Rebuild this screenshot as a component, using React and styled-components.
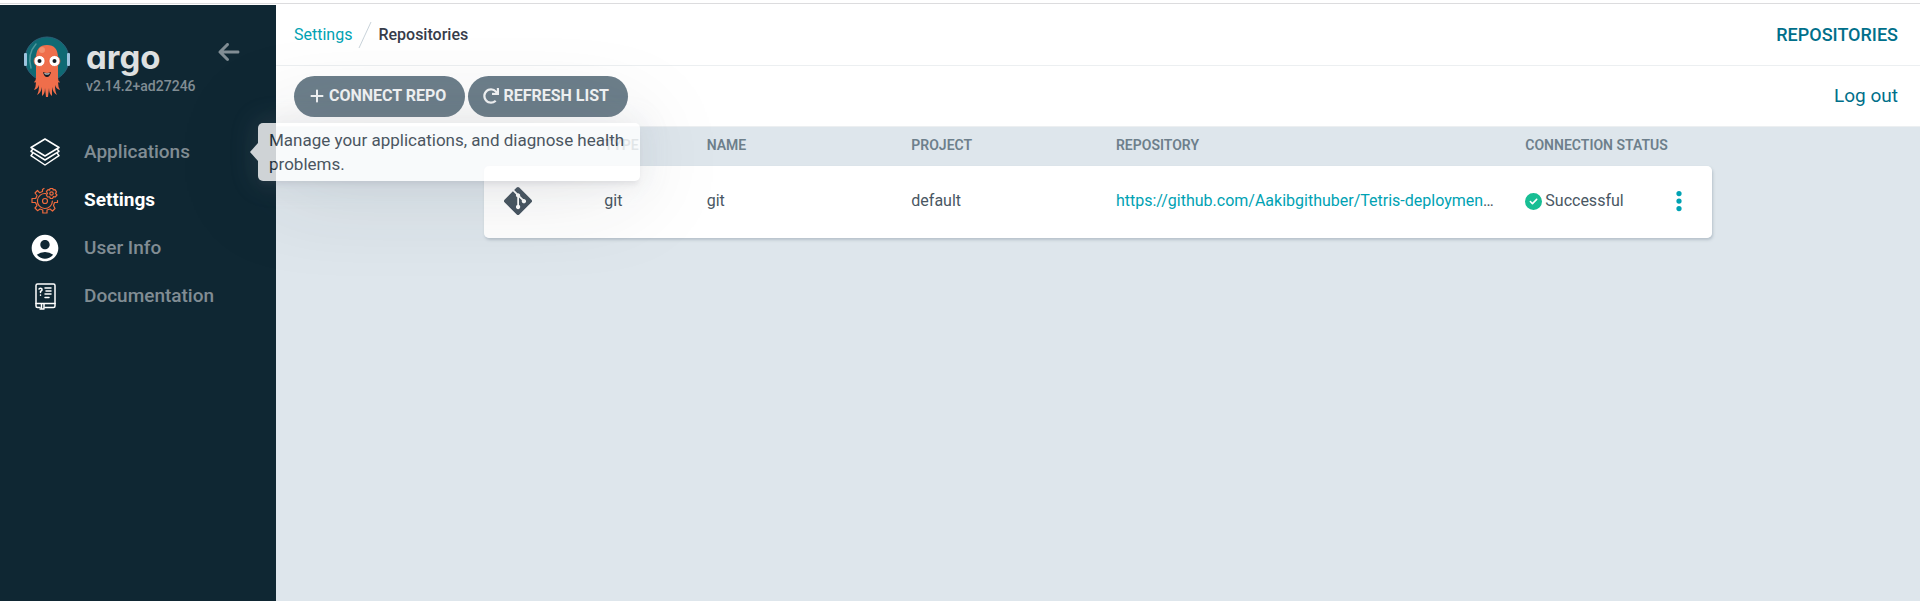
import React from 'react';
import styled, { createGlobalStyle, css } from 'styled-components';
import {
  FaArrowLeft,
  FaCircleCheck,
  FaEllipsisVertical,
  FaGitAlt,
  FaPlus,
} from 'react-icons/fa6';
import { FaRedo } from 'react-icons/fa';
import { MdAccountCircle } from 'react-icons/md';

const GlobalStyle = createGlobalStyle`
  *, *::before, *::after { box-sizing: border-box; }
  body {
    margin: 0;
    background: #dee6ec;
    color: #495763;
    font-family: Roboto, "Liberation Sans", sans-serif;
    font-size: 16px;
    line-height: 24px;
  }
  a { color: inherit; text-decoration: none; }
  button { font: inherit; border: 0; padding: 0; cursor: pointer; }
`;

const Page = styled.div`
  display: flex;
  flex-direction: column;
  min-height: 100vh;
`;

const TopEdge = styled.div`
  height: 5px;
  background: #fff;
  border-top: 3px solid #fff;
  box-shadow: inset 0 1px #dcdcde;
`;

const Shell = styled.div`
  display: flex;
  flex: 1;
`;

const Sidebar = styled.aside`
  flex: 0 0 276px;
  background: #0f2733;
  padding: 30px 22px;
`;

const Brand = styled.div`
  display: flex;
  align-items: flex-start;
`;

const BrandText = styled.div`
  flex: 1;
  margin-left: 14px;
  padding-top: 5px;
`;

const Wordmark = styled.div`
  color: #dee0e0;
  font-family: Inter, "Liberation Sans", sans-serif;
  font-feature-settings: "cv11";
  font-size: 33px;
  font-weight: 700;
  line-height: 34px;
`;

const Version = styled.div`
  color: #818d94;
  font-size: 14px;
  font-weight: 500;
  line-height: 24px;
`;

const CollapseButton = styled.button`
  display: flex;
  background: none;
  color: #818d94;
  font-size: 24px;
  margin: 5px 13px 0 0;
`;

const Nav = styled.nav`
  display: flex;
  flex-direction: column;
  margin-top: 29px;
`;

const NavLink = styled.a`
  display: flex;
  align-items: center;
  gap: 24px;
  height: 48px;
  padding-left: 8px;
  font-size: 19px;
  font-weight: 500;
  color: #818d94;
  ${(p) => p.$active && css`color: #fff; font-weight: 700;`}
`;

const NavIcon = styled.span`
  display: flex;
  flex: none;
  width: 30px;
  justify-content: center;
  svg { flex: none; }
`;

const Main = styled.main`
  flex: 1;
  min-width: 0;
`;

const Bar = styled.div`
  display: flex;
  align-items: center;
  justify-content: space-between;
  height: 61px;
  padding: 0 22px 0 18px;
  background: #fff;
  border-bottom: 1px solid #eceff1;
`;

const Breadcrumbs = styled.nav`
  display: flex;
  align-items: center;
  gap: 6px;
  font-weight: 500;
  color: #363c4a;
`;

const Crumb = styled.a`
  color: #00a2b3;
  font-weight: 400;
`;

const PageTitle = styled.h1`
  margin: 0;
  color: #006f8a;
  font-size: 18px;
  font-weight: 500;
`;

const Actions = styled.div`
  display: flex;
  gap: 3px;
`;

const ActionButton = styled.button`
  display: flex;
  align-items: center;
  gap: 4px;
  height: 41px;
  padding: 0 19px 0 15px;
  border-radius: 21px;
  background: #6d7f8b;
  color: #f3f5f6;
  font-size: 16px;
  font-weight: 700;
  text-transform: uppercase;
  svg { width: 16px; height: 16px; }
`;

const Logout = styled.a`
  color: #006f8a;
  font-size: 19px;
`;

const RepoTable = styled.table`
  width: 100%;
  max-width: 1228px;
  margin: 0 auto;
  table-layout: fixed;
  border-collapse: separate;
  border-spacing: 0;
  text-align: left;
`;

const Col = styled.col`
  width: ${(p) => (p.$span * 100) / 12}%;
`;

const Head = styled.th`
  height: 39px;
  padding: 0 18px 3px;
  color: #6d7f8b;
  font-size: 14px;
  font-weight: 600;
  line-height: 20px;
`;

const Row = styled.tr`
  border-radius: 5px;
  box-shadow: 1px 2px 3px rgba(109, 127, 139, 0.35);
`;

const Cell = styled.td`
  height: 72px;
  padding: 0 10px 2px 18px;
  overflow: hidden;
  background: #fff;
  white-space: nowrap;
  text-overflow: ellipsis;
  svg { display: block; }
  &:first-child { border-radius: 5px 0 0 5px; }
  &:last-child { border-radius: 0 5px 5px 0; }
`;

const RepoLink = styled.a`
  color: #00a2b3;
`;

const Status = styled.div`
  display: flex;
  align-items: center;
  gap: 3px;
  svg { color: #18be94; }
`;

const MenuButton = styled.button`
  background: none;
  color: #00a2b3;
  margin: 0 11px 0 auto;
  svg { color: inherit; }
`;

const NavItem = styled.div`
  position: relative;
`;

const Tooltip = styled.div`
  position: absolute;
  top: -5px;
  left: 236px;
  width: 382px;
  padding: 5px 11px;
  border-radius: 5px;
  background: #fff;
  color: #26323d;
  font-size: 17px;
  opacity: 0.8;
  z-index: 1;
  box-shadow:
    0 0 24px 5px rgba(154, 161, 177, 0.15),
    0 5px 96px -10px rgba(36, 40, 47, 0.25),
    0 5px 5px -2px rgba(91, 94, 105, 0.15);
  &::before {
    content: "";
    position: absolute;
    top: 20px;
    left: -8px;
    border: solid transparent;
    border-width: 9px 8px 9px 0;
    border-right-color: #fff;
  }
`;

const Mascot = () => (
  <svg width="50" height="64" viewBox="0 0 50 64" aria-hidden="true">
    <circle cx="25" cy="24" r="22" fill="#0f6a74" stroke="#2c5f78" />
    <rect x="2" y="18" width="3" height="13" rx="1" fill="#9dc3de" />
    <rect x="45" y="18" width="3" height="13" rx="1" fill="#9dc3de" />
    <path d="M14 9Q5 19 9 33" fill="none" stroke="#4e979c" strokeWidth="1.500" strokeLinecap="round" />
    <path d="M14 23Q14 10 25 10Q36 10 36 23V43Q36 46 38 47Q37 48 36 47Q36 52 38 55Q34 54 33 50Q33 57 35 60Q31 58 30 52Q30 59 30 61Q27 59 27 53L26 62H24L23 53Q23 59 20 61Q20 59 20 52Q19 58 15 60Q17 57 17 50Q16 54 12 55Q14 52 14 47Q13 48 12 47Q14 46 14 42Z" fill="#ef6e4b" />
    <circle cx="20" cy="15" r="3" fill="#f3906f" />
    <circle cx="17.500" cy="26" r="5.500" fill="#fff" stroke="#e9532b" strokeWidth=".7" />
    <circle cx="32.500" cy="26" r="5.500" fill="#fff" stroke="#e9532b" strokeWidth=".7" />
    <circle cx="17.500" cy="26" r="2" fill="#151a22" />
    <circle cx="32.500" cy="26" r="2" fill="#151a22" />
    <path d="M21 37Q25 39 29 37Q28 42 25 42Q22 42 21 37Z" fill="#151a22" />
    <path d="M22.500 38Q25 39 27.500 38V39Q25 40 22.500 39Z" fill="#fff" />
  </svg>
);

const LayersIcon = () => (
  <svg width="30" height="30" viewBox="0 0 30 30" fill="none" stroke="#fff" strokeWidth="1.500" strokeLinejoin="round" aria-hidden="true">
    <path d="M15 2L29 10.500L15 19L1 10.500Z" />
    <path d="M3 12L1 14.300L15 23L29 14.300L27 12" />
    <path d="M3 16L1 18.600L15 28L29 18.600L27 16" />
  </svg>
);

const GearsIcon = () => (
  <svg width="30" height="30" viewBox="0 0 30 30" fill="none" stroke="#ef6b3e" strokeWidth="1.200" strokeLinejoin="round" strokeLinecap="round" aria-hidden="true">
    <circle cx="15" cy="16" r="2.500" />
    <path d="M16 8.600A7.500 7.500 0 1 0 22.400 16" />
    <path d="M14 3.500L12.500 4.500V6.500L9.500 7.700L7.500 5.500L5 8L7 10.500L5.700 13.500H2V17.500H5.500L7 20.700L5 23L7.500 25.700L10 24L12.800 25V28H17V25L20 24L22.500 26L25 23.500L23.500 20.500L24.500 17.500H27.500V15.500" />
    <circle cx="21.500" cy="8.500" r="1.700" />
    <path d="M20 3.500H22.800L23.200 5L25 4.600L26.500 6.800L25.500 8.300L27 10L25.200 12L23.500 11.600L22.500 13.500H20.300L19.700 11.800L17.500 12L16.400 10L17.500 8.500L16.400 6.500L18 4.700L19.700 5.200Z" />
  </svg>
);

const BookIcon = () => (
  <svg width="30" height="30" viewBox="0 0 30 30" fill="none" stroke="#fff" strokeWidth="1.500" strokeLinecap="round" aria-hidden="true">
    <path d="M10 26.500H7.500Q6 26.500 6 25V4.500Q6 3 7.500 3H23.500Q25 3 25 4.500V25Q25 26.500 23.500 26.500H15" />
    <path d="M6 22.500H25M11.500 23V27.500M14 23V27.500M10 28H14" />
    <path d="M9 8Q10.500 6.500 12 8Q12.500 9.500 10.500 10.500V11.500M10.500 14V14.200M15 7H21M16 10H21M15 13H21M15 16.500H19" />
  </svg>
);

const Slash = () => (
  <svg width="14" height="28" viewBox="0 0 14 28" aria-hidden="true">
    <path d="M1 27L13 1" stroke="#c9d3da" />
  </svg>
);

const NAV_ITEMS = [
  { label: 'Applications', icon: <LayersIcon />, tip: 'Manage your applications, and diagnose health problems.' },
  { label: 'Settings', icon: <GearsIcon />, active: true },
  { label: 'User Info', icon: <MdAccountCircle size={32} color="#fff" /> },
  { label: 'Documentation', icon: <BookIcon /> },
];

const COLUMNS = [
  { label: '', span: 1 },
  { label: 'TYPE', span: 1 },
  { label: 'NAME', span: 2 },
  { label: 'PROJECT', span: 2 },
  { label: 'REPOSITORY', span: 4 },
  { label: 'CONNECTION STATUS', span: 2 },
];

const REPO_URL = 'https://github.com/Aakibgithuber/Tetris-deployment-file';

export default function App() {
  return (
    <Page>
      <GlobalStyle />
      <TopEdge />
      <Shell>
        <Sidebar>
          <Brand>
            <Mascot />
            <BrandText>
              <Wordmark>argo</Wordmark>
              <Version>v2.14.2+ad27246</Version>
            </BrandText>
            <CollapseButton type="button" aria-label="Collapse sidebar">
              <FaArrowLeft />
            </CollapseButton>
          </Brand>
          <Nav aria-label="Main">
            {NAV_ITEMS.map((item) => (
              <NavItem key={item.label}>
                <NavLink href="#" $active={item.active}>
                  <NavIcon>{item.icon}</NavIcon>
                  {item.label}
                </NavLink>
                {item.tip && <Tooltip role="tooltip">{item.tip}</Tooltip>}
              </NavItem>
            ))}
          </Nav>
        </Sidebar>
        <Main>
          <Bar>
            <Breadcrumbs aria-label="Breadcrumb">
              <Crumb href="#">Settings</Crumb>
              <Slash />
              <span>Repositories</span>
            </Breadcrumbs>
            <PageTitle>REPOSITORIES</PageTitle>
          </Bar>
          <Bar>
            <Actions>
              <ActionButton type="button"><FaPlus />Connect Repo</ActionButton>
              <ActionButton type="button"><FaRedo />Refresh List</ActionButton>
            </Actions>
            <Logout href="#">Log out</Logout>
          </Bar>
          <RepoTable>
            <colgroup>
              {COLUMNS.map((c, i) => <Col key={i} $span={c.span} />)}
            </colgroup>
            <thead>
              <tr>{COLUMNS.map((c, i) => <Head key={i} scope="col">{c.label}</Head>)}</tr>
            </thead>
            <tbody>
              <Row>
                <Cell><FaGitAlt size={32} /></Cell>
                <Cell>git</Cell>
                <Cell>git</Cell>
                <Cell>default</Cell>
                <Cell><RepoLink href="#">{REPO_URL}</RepoLink></Cell>
                <Cell>
                  <Status>
                    <FaCircleCheck size={17} />
                    Successful
                    <MenuButton type="button" aria-label="Repository actions">
                      <FaEllipsisVertical size={24} />
                    </MenuButton>
                  </Status>
                </Cell>
              </Row>
            </tbody>
          </RepoTable>
        </Main>
      </Shell>
    </Page>
  );
}
